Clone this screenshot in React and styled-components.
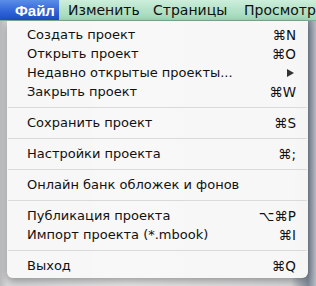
import React from 'react';
import styled, { createGlobalStyle } from 'styled-components';

const Global = createGlobalStyle`
  html, body { margin: 0; padding: 0; }
  body {
    width: 316px;
    height: 286px;
    overflow: hidden;
    background: #c4c6c8;
    font-family: "DejaVu Sans", "Liberation Sans", sans-serif;
  }
`;

const Screen = styled.div`
  width: 316px;
  height: 286px;
  display: flex;
  flex-direction: column;
  background: linear-gradient(90deg, #b9bbbd 0, #d6d8da 7px, #e8e8e8 40%, #d9dadb 92%, #7f8a99 97.5%, #b8bcc2 100%);
`;

const MenuBar = styled.div`
  height: 21px;
  display: flex;
  align-items: center;
  background: linear-gradient(180deg, #cdeedb 0%, #b4e2c8 50%, #a2d8ba 100%);
  border-bottom: 1px solid #7fae94;
  box-sizing: border-box;
  font-size: 14px;
  color: #111;
  white-space: nowrap;
`;

const BarItem = styled.div`
  height: 100%;
  display: flex;
  align-items: center;
  flex: none;
  width: ${p => p.$w}px;
  box-sizing: border-box;
  padding-left: ${p => p.$pl}px;
  font-family: ${p => (p.$active ? '"Liberation Sans", Arial, sans-serif' : 'inherit')};
  font-weight: ${p => (p.$active ? 700 : 400)};
  font-size: ${p => (p.$active ? '15px' : '14px')};
  color: ${p => (p.$active ? '#fff' : '#111')};
  background: ${p => (p.$active ? 'linear-gradient(180deg, #5b8ee8 0%, #2e62d6 60%, #1f4fc4 100%)' : 'transparent')};
`;

const Below = styled.div`
  flex: 1;
  display: flex;
`;

const Menu = styled.div`
  margin-left: 7px;
  width: 301px;
  height: 257px;
  box-sizing: border-box;
  padding: 4px 0 3px;
  background: rgba(248, 248, 248, 0.97);
  border-radius: 0 0 6px 6px;
  box-shadow: 0 3px 8px rgba(0, 0, 0, 0.35);
  display: flex;
  flex-direction: column;
`;

const Item = styled.div`
  height: 19px;
  display: flex;
  align-items: center;
  justify-content: space-between;
  padding: 0 12px 0 20px;
  font-size: 13px;
  color: #111;
  white-space: nowrap;
`;

const Key = styled.span`
  font-size: 13.5px;
  color: #111;
`;

const Arrow = styled.span`
  width: 0;
  height: 0;
  margin-right: 2px;
  border-top: 4px solid transparent;
  border-bottom: 4px solid transparent;
  border-left: 7px solid #333;
`;

const Sep = styled.div`
  height: 12px;
  display: flex;
  align-items: center;
  &::after {
    content: '';
    flex: 1;
    margin: 0 1px;
    height: 1px;
    background: #dadada;
  }
`;

const bar = [
  ['Файл', 59, 15, true],
  ['Изменить', 94, 9],
  ['Страницы', 90, 0],
  ['Просмотр', 73, 1],
];

const groups = [
  [
    ['Создать проект', '⌘N'],
    ['Открыть проект', '⌘O'],
    ['Недавно открытые проекты...', 'arrow'],
    ['Закрыть проект', '⌘W'],
  ],
  [['Сохранить проект', '⌘S']],
  [['Настройки проекта', '⌘;']],
  [['Онлайн банк обложек и фонов', '']],
  [
    ['Публикация проекта', '⌥⌘P'],
    ['Импорт проекта (*.mbook)', '⌘I'],
  ],
  [['Выход', '⌘Q']],
];

export default function App() {
  return (
    <>
      <Global />
      <Screen>
        <MenuBar>
          {bar.map(([t, w, pl, active]) => (
            <BarItem key={t} $w={w} $pl={pl} $active={active}>{t}</BarItem>
          ))}
        </MenuBar>
        <Below>
          <Menu>
            {groups.map((g, gi) => (
              <React.Fragment key={gi}>
                {gi > 0 && <Sep />}
                {g.map(([label, key]) => (
                  <Item key={label}>
                    <span>{label}</span>
                    {key === 'arrow' ? <Arrow /> : <Key>{key}</Key>}
                  </Item>
                ))}
              </React.Fragment>
            ))}
          </Menu>
        </Below>
      </Screen>
    </>
  );
}
